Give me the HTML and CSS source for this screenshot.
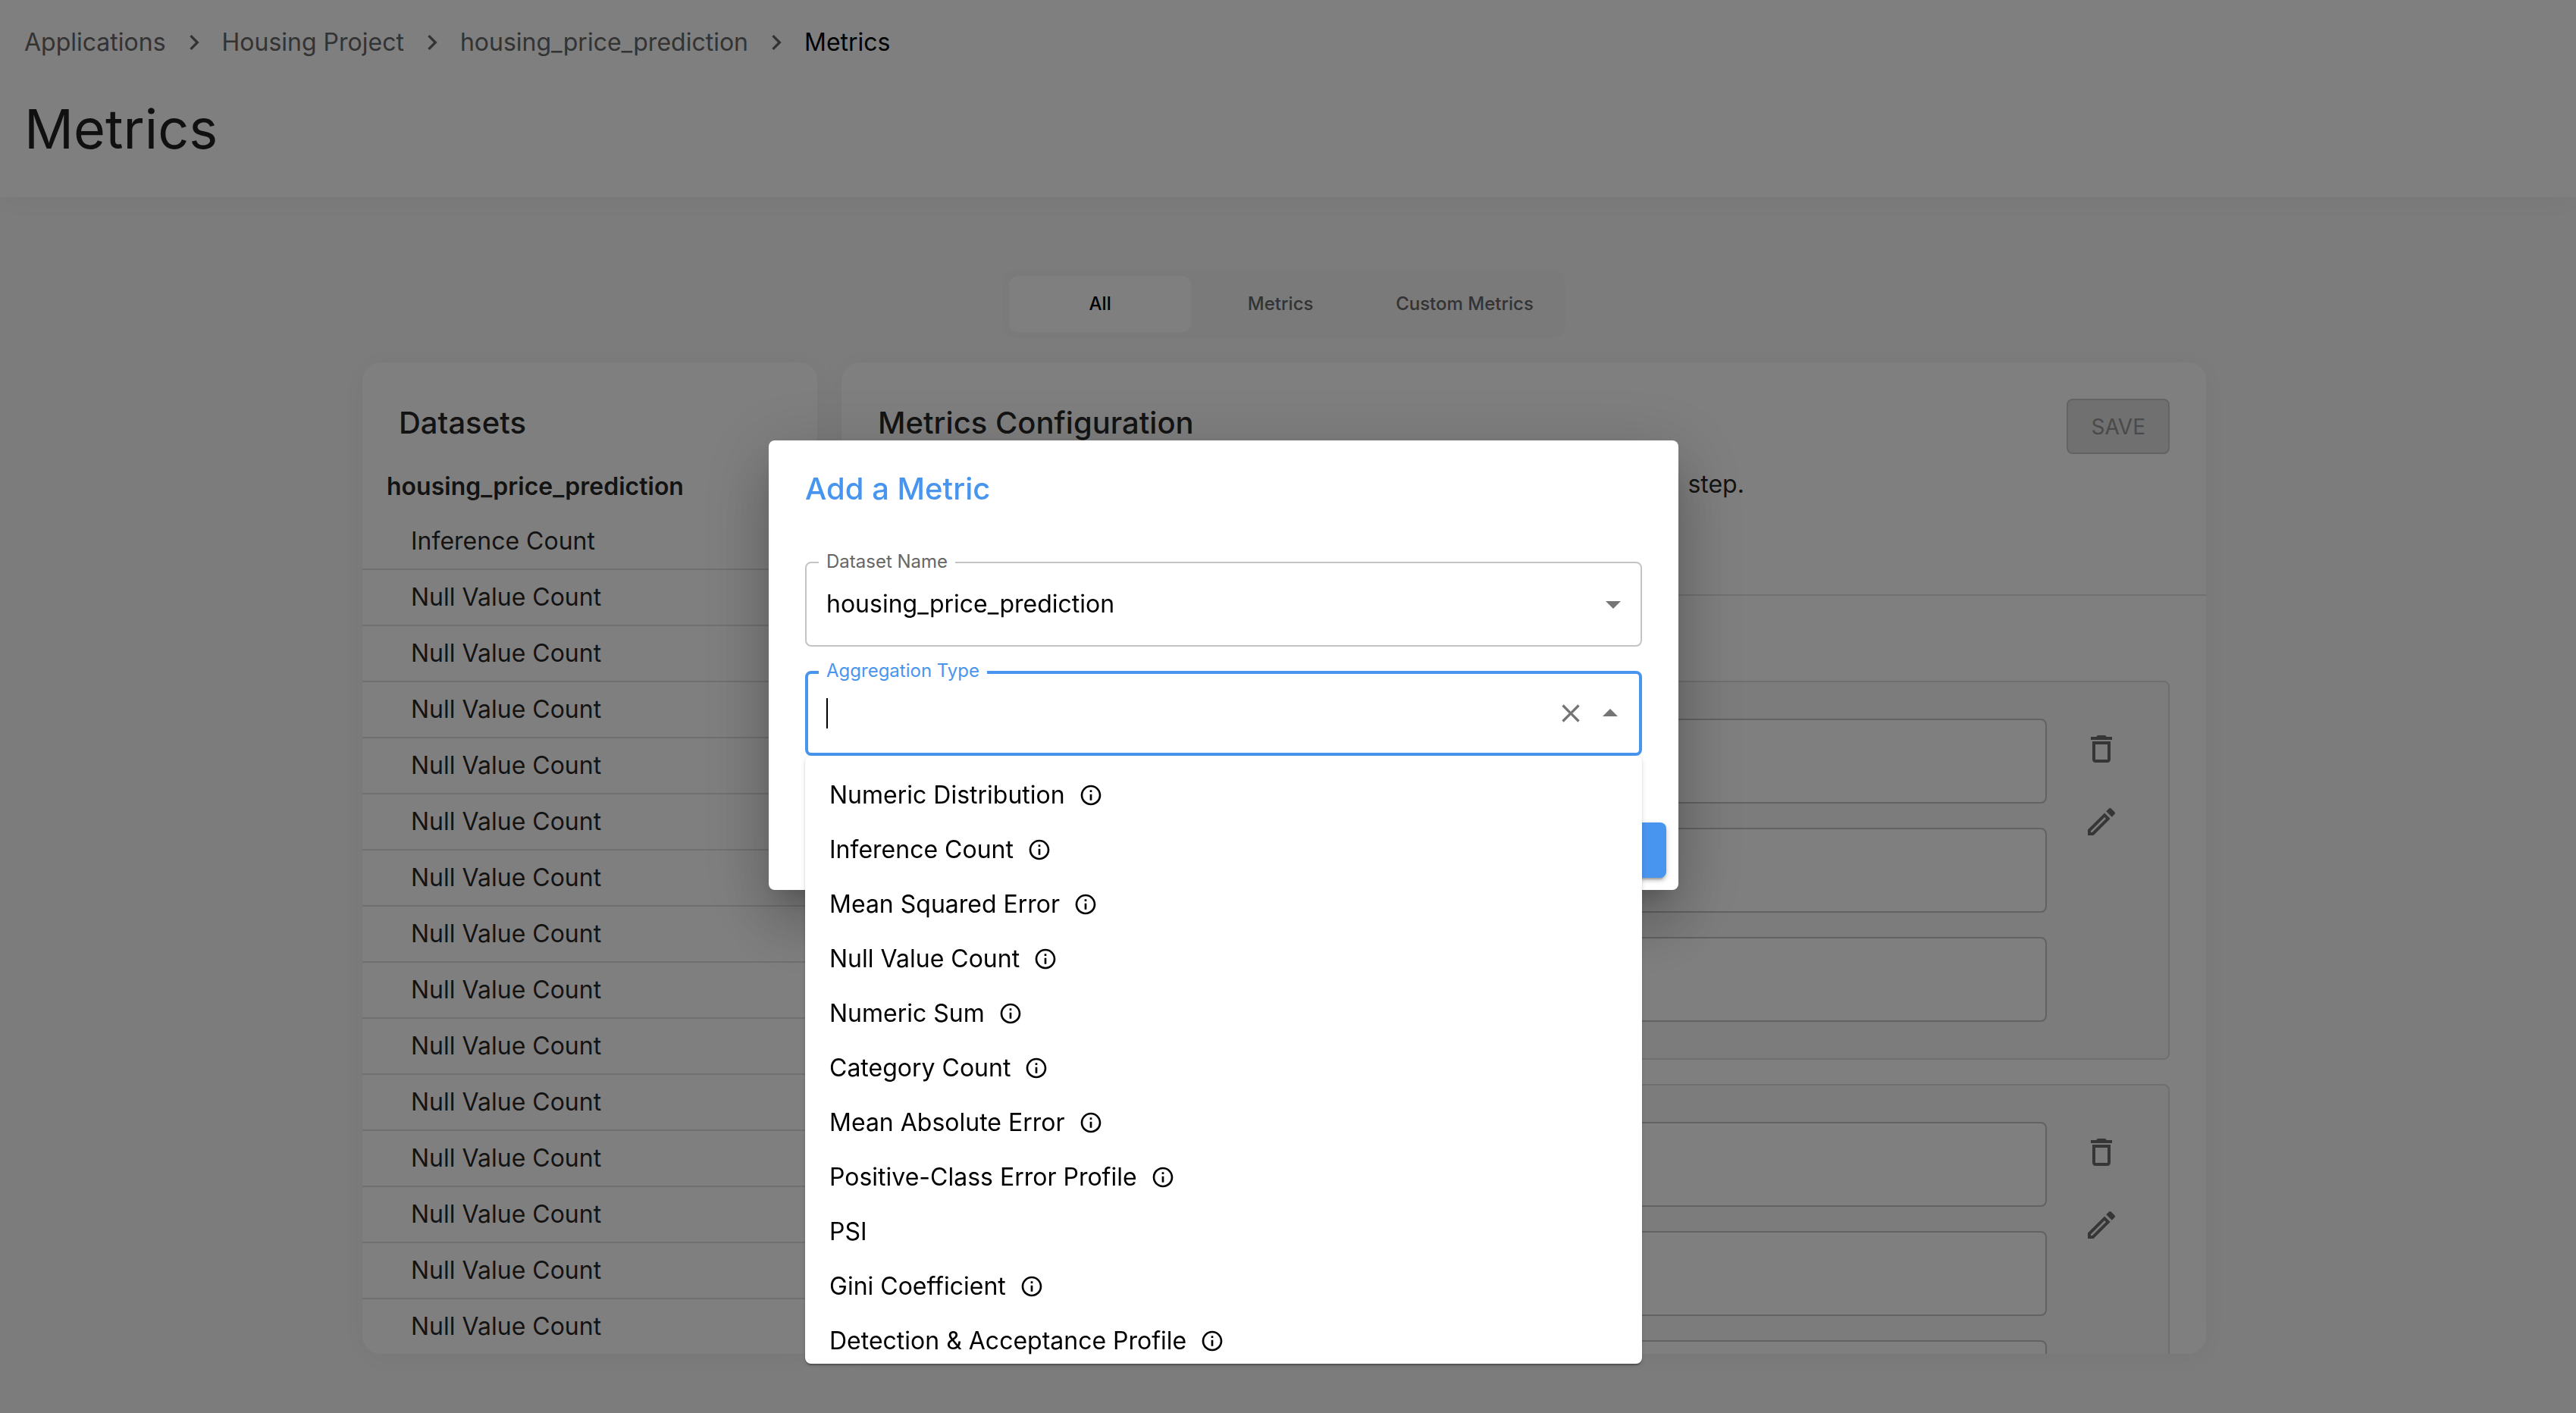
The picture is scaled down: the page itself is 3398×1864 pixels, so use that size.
FILE: index.html
```html
<!DOCTYPE html>
<html lang="en">
<head>
    <meta charset="UTF-8">
    <meta name="viewport" content="width=device-width, initial-scale=1">
    <title>Metrics</title>
    <link rel="stylesheet" href="styles.css">
</head>
<body>
<svg class="sprite" aria-hidden="true">
    <symbol id="chevron" viewBox="0 0 24 24"><path d="M10 6 8.59 7.41 13.17 12l-4.58 4.59L10 18l6-6z"/></symbol>
    <symbol id="info" viewBox="0 0 24 24"><path d="M11 7h2v2h-2zm0 4h2v6h-2zm1-9C6.48 2 2 6.48 2 12s4.48 10 10 10 10-4.480 10-10S17.520 2 12 2zm0 18c-4.410 0-8-3.590-8-8s3.590-8 8-8 8 3.590 8 8-3.590 8-8 8z"/></symbol>
    <symbol id="delete" viewBox="0 0 24 24"><path d="M6 19c0 1.100.9 2 2 2h8c1.100 0 2-.9 2-2V7H6v12zM8 9h8v10H8V9zm7.500-5-1-1h-5l-1 1H5v2h14V4z"/></symbol>
    <symbol id="edit" viewBox="0 0 24 24"><path d="m14.060 9.020.92.92L5.920 19H5v-.92l9.060-9.060M17.660 3c-.25 0-.51.1-.7.290l-1.830 1.830 3.750 3.750 1.830-1.830c.39-.39.39-1.020 0-1.410l-2.340-2.340c-.2-.2-.45-.29-.71-.29zm-3.600 3.190L3 17.250V21h3.750L17.810 9.940l-3.750-3.750z"/></symbol>
    <symbol id="down" viewBox="0 0 24 24"><path d="m7 10 5 5 5-5z"/></symbol>
    <symbol id="up" viewBox="0 0 24 24"><path d="m7 14 5-5 5 5z"/></symbol>
    <symbol id="close" viewBox="0 0 24 24"><path d="M19 6.410 17.590 5 12 10.590 6.410 5 5 6.410 10.590 12 5 17.590 6.410 19 12 13.410 17.590 19 19 17.590 13.410 12z"/></symbol>
</svg>

<div class="app">
    <header class="header">
        <nav class="breadcrumbs">
            <a href="#">Applications</a>
            <svg><use href="#chevron"/></svg>
            <a href="#">Housing Project</a>
            <svg><use href="#chevron"/></svg>
            <a href="#">housing_price_prediction</a>
            <svg><use href="#chevron"/></svg>
            <span class="current">Metrics</span>
        </nav>
        <h1>Metrics</h1>
    </header>

    <main class="main">
        <div class="tabs">
            <button class="tab active">All</button>
            <button class="tab">Metrics</button>
            <button class="tab">Custom Metrics</button>
        </div>

        <div class="columns">
            <aside class="card datasets">
                <h2>Datasets</h2>
                <h3>housing_price_prediction</h3>
                <ul>
                    <li>Inference Count</li>
                    <li>Null Value Count</li>
                    <li>Null Value Count</li>
                    <li>Null Value Count</li>
                    <li>Null Value Count</li>
                    <li>Null Value Count</li>
                    <li>Null Value Count</li>
                    <li>Null Value Count</li>
                    <li>Null Value Count</li>
                    <li>Null Value Count</li>
                    <li>Null Value Count</li>
                    <li>Null Value Count</li>
                    <li>Null Value Count</li>
                    <li>Null Value Count</li>
                    <li>Null Value Count</li>
                </ul>
            </aside>

            <section class="card config">
                <div class="config-header">
                    <div class="config-intro">
                        <h2>Metrics Configuration</h2>
                        <p>Edit the metric below or add new metrics, then save them before next&nbsp; step.</p>
                    </div>
                    <button class="save" disabled>SAVE</button>
                </div>
                <div class="config-list">
                    <div class="metric">
                        <div class="metric-fields">
                            <input type="text" aria-label="Metric name">
                            <input type="text" aria-label="Dataset">
                            <input type="text" aria-label="Aggregation type">
                        </div>
                        <div class="metric-actions">
                            <button aria-label="Delete"><svg><use href="#delete"/></svg></button>
                            <button aria-label="Edit"><svg><use href="#edit"/></svg></button>
                        </div>
                    </div>
                    <div class="metric">
                        <div class="metric-fields">
                            <input type="text" aria-label="Metric name">
                            <input type="text" aria-label="Dataset">
                            <input type="text" aria-label="Aggregation type">
                        </div>
                        <div class="metric-actions">
                            <button aria-label="Delete"><svg><use href="#delete"/></svg></button>
                            <button aria-label="Edit"><svg><use href="#edit"/></svg></button>
                        </div>
                    </div>
                </div>
            </section>
        </div>
    </main>
</div>

<div class="backdrop">
    <div class="dialog" role="dialog" aria-labelledby="dialog-title">
        <h2 id="dialog-title">Add a Metric</h2>
        <div class="dialog-content">
            <div class="field">
                <label for="dataset">Dataset Name</label>
                <select id="dataset">
                    <option>housing_price_prediction</option>
                </select>
                <svg class="select-arrow"><use href="#down"/></svg>
            </div>
            <div class="field focused">
                <label for="aggregation">Aggregation Type</label>
                <input type="text" id="aggregation">
                <span class="caret"></span>
                <div class="adornment">
                    <button class="clear" aria-label="Clear"><svg><use href="#close"/></svg></button>
                    <button class="toggle" aria-label="Close"><svg><use href="#up"/></svg></button>
                </div>
                <ul class="menu" role="listbox">
                    <li role="option">Numeric Distribution <svg><use href="#info"/></svg></li>
                    <li role="option">Inference Count <svg><use href="#info"/></svg></li>
                    <li role="option">Mean Squared Error <svg><use href="#info"/></svg></li>
                    <li role="option">Null Value Count <svg><use href="#info"/></svg></li>
                    <li role="option">Numeric Sum <svg><use href="#info"/></svg></li>
                    <li role="option">Category Count <svg><use href="#info"/></svg></li>
                    <li role="option">Mean Absolute Error <svg><use href="#info"/></svg></li>
                    <li role="option">Positive-Class Error Profile <svg><use href="#info"/></svg></li>
                    <li role="option">PSI</li>
                    <li role="option">Gini Coefficient <svg><use href="#info"/></svg></li>
                    <li role="option">Detection &amp; Acceptance Profile <svg><use href="#info"/></svg></li>
                </ul>
            </div>
        </div>
        <div class="dialog-actions">
            <button class="primary" aria-label="Add metric"></button>
        </div>
    </div>
</div>
</body>
</html>
```
FILE: styles.css
```css
* {
    box-sizing: border-box;
}

body {
    margin: 0;
    background: #f9f9f9;
    color: rgba(0, 0, 0, 0.87);
    font-family: Inter, sans-serif;
    font-size: 32px;
    line-height: 48px;
}

h1, h2, h3, p, ul {
    margin: 0;
    padding: 0;
}

ul {
    list-style: none;
}

button, input, select {
    font: inherit;
    color: inherit;
    margin: 0;
    padding: 0;
    border: 0;
    background: none;
}

svg {
    display: block;
    fill: currentColor;
}

h2 {
    font-size: 40px;
    line-height: 64px;
    font-weight: 500;
}

.sprite {
    display: none;
}

.app {
    display: flex;
    flex-direction: column;
    height: 100vh;
    overflow: hidden;
}

/* header */
.header {
    padding: 32px 32px 48px;
    background: #fff;
    box-shadow: 0 4px 40px rgba(0, 0, 0, 0.05);
}

.breadcrumbs {
    display: flex;
    align-items: center;
    gap: 17px;
    margin-bottom: 48px;
    color: #666;
}

.breadcrumbs a {
    color: inherit;
    text-decoration: none;
}

.breadcrumbs svg {
    width: 40px;
    height: 40px;
}

.breadcrumbs .current {
    color: #000;
}

h1 {
    font-size: 72px;
    line-height: 84px;
    font-weight: 400;
}

/* content */
.main {
    flex: 1;
    min-height: 0;
    display: flex;
    flex-direction: column;
    align-items: center;
    gap: 32px;
    padding: 96px 10px 78px 0;
}

.tabs {
    display: flex;
    padding: 8px;
    border-radius: 16px;
    background: #f5f5f5;
}

.tab {
    min-width: 236px;
    padding: 0 34px;
    height: 74px;
    border-radius: 12px;
    font-size: 24px;
    font-weight: 500;
    color: #666;
}

.tab.active {
    min-width: 240px;
    background: #fff;
    color: #000;
}

.columns {
    flex: 1;
    min-height: 0;
    display: grid;
    grid-template-columns: 1fr 3fr;
    gap: 32px;
    width: 100%;
    max-width: 2432px;
}

.card {
    overflow: hidden;
    border-radius: 24px;
    background: #fff;
    box-shadow: 0 4px 40px rgba(0, 0, 0, 0.05);
}

.datasets h2 {
    padding: 48px 48px 0;
    margin-bottom: 28px;
}

.datasets h3 {
    padding: 0 32px 12px;
    font-size: 32px;
    line-height: 48px;
    font-weight: 600;
}

.datasets li {
    padding: 12px 64px;
    border-bottom: 2px solid #e0e0e0;
}

.config-header {
    display: flex;
    justify-content: space-between;
    align-items: flex-start;
    min-height: 308px;
    padding: 48px;
    border-bottom: 2px solid #e0e0e0;
}

.config-intro p {
    margin-top: 25px;
}

.save {
    height: 73px;
    padding: 0 30px;
    border: 2px solid #c6c6c6;
    border-radius: 8px;
    background: #e0e0e0;
    color: #949494;
    font-size: 28px;
}

.config-list {
    display: flex;
    flex-direction: column;
    gap: 32px;
    padding: 112px 48px 48px;
}

.metric {
    display: flex;
    gap: 32px;
    padding: 48px;
    border: 2px solid #dedede;
    border-radius: 8px;
    background: #f8f8f8;
}

.metric-fields {
    flex: 1;
    display: flex;
    flex-direction: column;
    gap: 32px;
}

.metric-fields input {
    width: 100%;
    height: 112px;
    padding: 0 28px;
    border: 2px solid #c4c4c4;
    border-radius: 8px;
    background: #fff;
}

.metric-actions {
    display: flex;
    flex-direction: column;
    gap: 16px;
    color: #6c6c6c;
}

.metric-actions button {
    padding: 16px;
}

.metric-actions svg {
    width: 48px;
    height: 48px;
}

/* dialog */
.backdrop {
    position: fixed;
    inset: 0;
    display: flex;
    align-items: center;
    justify-content: center;
    padding: 0 170px 110px 0;
    background: rgba(0, 0, 0, 0.5);
}

.dialog {
    width: 1200px;
    border-radius: 8px;
    background: #fff;
    box-shadow: 0 22px 30px -14px rgba(0, 0, 0, 0.2), 0 48px 76px 6px rgba(0, 0, 0, 0.14), 0 18px 92px 16px rgba(0, 0, 0, 0.12);
}

.dialog h2 {
    padding: 32px 48px 0;
    color: #4895ef;
}

.dialog-content {
    display: flex;
    flex-direction: column;
    gap: 32px;
    padding: 64px 48px 72px;
}

.field {
    position: relative;
    color: #000;
}

.field label {
    position: absolute;
    top: -16px;
    left: 18px;
    padding: 0 10px;
    background: #fff;
    color: #666;
    font-size: 24px;
    line-height: 32px;
}

.field select,
.field input {
    display: block;
    width: 100%;
    height: 112px;
    padding: 0 26px;
    border: 2px solid #c4c4c4;
    border-radius: 8px;
    outline: none;
    appearance: none;
}

.field.focused label {
    color: #4895ef;
}

.field.focused input {
    border: 4px solid #4895ef;
}

.select-arrow {
    position: absolute;
    top: 32px;
    right: 14px;
    width: 48px;
    height: 48px;
    color: #757575;
    pointer-events: none;
}

.caret {
    position: absolute;
    top: 36px;
    left: 28px;
    width: 2px;
    height: 40px;
    background: #000;
}

.adornment {
    position: absolute;
    top: 0;
    right: 18px;
    height: 112px;
    display: flex;
    align-items: center;
    color: #757575;
}

.clear {
    padding: 8px;
}

.clear svg {
    width: 40px;
    height: 40px;
}

.toggle svg {
    width: 48px;
    height: 48px;
}

.menu {
    position: absolute;
    top: 112px;
    left: 0;
    right: 0;
    max-height: 802px;
    overflow: hidden;
    padding: 16px 0;
    border-radius: 8px;
    background: #fff;
    box-shadow: 0 4px 2px -2px rgba(0, 0, 0, 0.2), 0 2px 2px rgba(0, 0, 0, 0.14), 0 2px 6px rgba(0, 0, 0, 0.12);
}

.menu li {
    display: flex;
    align-items: center;
    gap: 18px;
    padding: 12px 32px;
}

.menu svg {
    width: 32px;
    height: 32px;
}

.dialog-actions {
    display: flex;
    justify-content: flex-end;
    padding: 16px;
}

.primary {
    width: 160px;
    height: 73px;
    border-radius: 8px;
    background: #4895ef;
    box-shadow: 0 6px 2px -4px rgba(0, 0, 0, 0.2), 0 4px 4px rgba(0, 0, 0, 0.14), 0 2px 10px rgba(0, 0, 0, 0.12);
}
```
